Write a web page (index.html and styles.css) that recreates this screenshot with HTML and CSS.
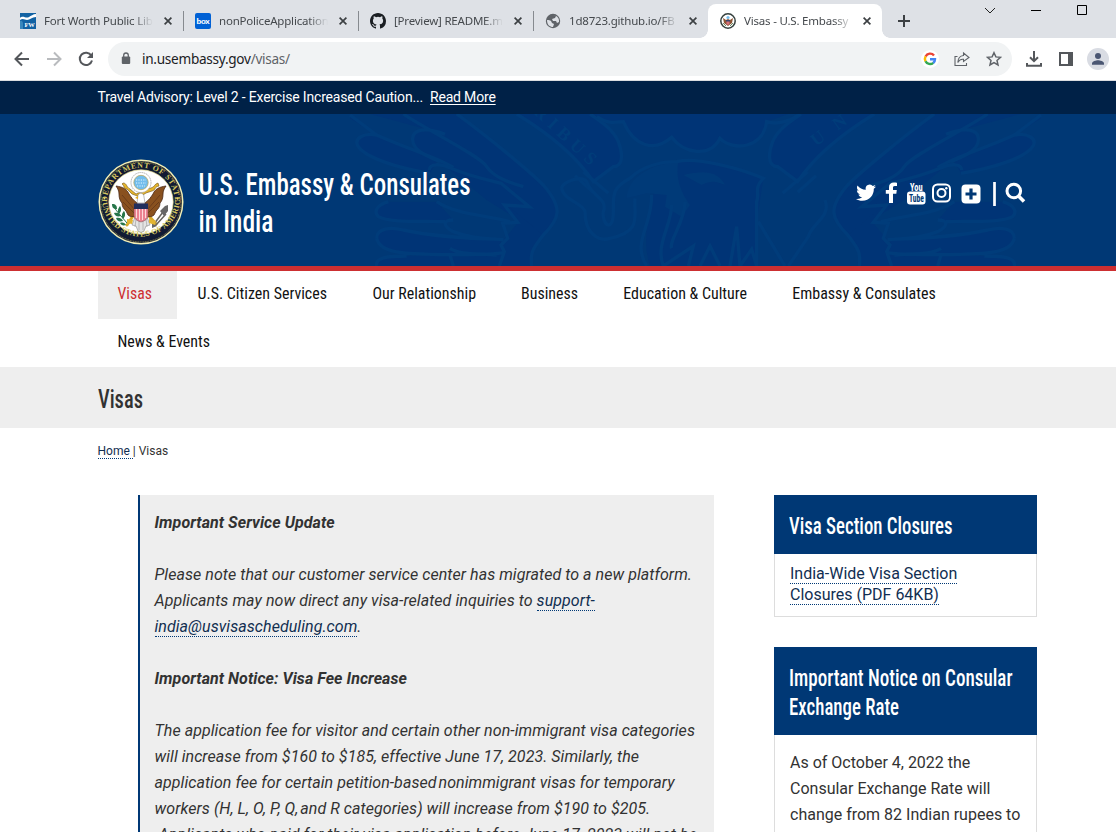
FILE: index.html
```html
<!DOCTYPE html>
<html lang="en">
<head>
<meta charset="utf-8">
<title>Visas - U.S. Embassy &amp; Consulates in India</title>
<link rel="stylesheet" href="styles.css">
</head>
<body>
<svg class="defs" width="0" height="0" aria-hidden="true">
  <defs>
    <symbol id="close" viewBox="0 0 8 8"><path d="M.6.6l6.8 6.8M7.400.6L.6 7.400" stroke="#3c4043" stroke-width="1.700" fill="none"/></symbol>
    <symbol id="seal" viewBox="0 0 86 86">
      <circle cx="43" cy="43" r="42.500" fill="#f4efb5"/>
      <circle cx="43" cy="43" r="41" fill="#111a33"/>
      <circle cx="43" cy="43" r="40" fill="none" stroke="#d8c95a" stroke-width=".6" stroke-dasharray="1 .7"/>
      <circle cx="43" cy="43" r="32.200" fill="#fff" stroke="#e5dc8c" stroke-width=".7"/>
      <path id="arcTop" d="M9.400 48A34 34 0 1 1 76.600 48" fill="none"/>
      <path id="arcBottom" d="M3.700 41A39.400 39.400 0 0 0 82.300 41" fill="none"/>
      <g class="seal-text">
        <text><textPath href="#arcTop" startOffset="5" textLength="107">DEPARTMENT OF STATE</textPath></text>
        <text><textPath href="#arcBottom" startOffset="3" textLength="121">UNITED STATES OF AMERICA</textPath></text>
      </g>
      <circle cx="6.500" cy="39.500" r="1" fill="#e8d765"/><circle cx="79.500" cy="39.500" r="1" fill="#e8d765"/>
      <path d="M35 57l-6 9M51 57l7 8" stroke="#d7a92b" stroke-width="3" stroke-linecap="round"/>
      <path d="M37 58l-3 8 4 1 2 5 3 1.500 3-1.500 2-5 4-1-3-8z" fill="#e4e4e4" stroke="#888" stroke-width=".6"/>
      <path d="M38 60l-1 8M41 60v11M45 60v11M48 60l1 8" stroke="#999" stroke-width=".6"/>
      <path id="sealWing" d="M39 44c-4-3-6-6-8-9-2-5-6-7-13-8 2 3 3 5 3 8 0 4 1 7 3 9 0 4 2 6 4 8l2 4c2 2 5 2 7 1z" fill="#89511f" stroke="#482715" stroke-width=".8"/>
      <use href="#sealWing" transform="matrix(-1 0 0 1 86 0)"/>
      <path d="M24 36l13 15M25 43l11 11M62 36L49 51M61 43L50 54" stroke="#5f3418" stroke-width=".7"/>
      <path d="M25 24c4 0 3 4 7 6l6 5c4-2 6-2 10-5l5-1c4-1 3-4 7-5l1 3c-5 1-3 4-7 5l-6 2-6 4-8-3-5-5c-4 0-2-3-5-5z" fill="#e5b52c" stroke="#6e531b" stroke-width=".6"/>
      <circle cx="43" cy="23.500" r="10" fill="#fff" stroke="#aaa" stroke-width="1" stroke-dasharray="1.300 .7"/>
      <circle cx="43" cy="23.500" r="7.200" fill="#72bdec" stroke="#b9a355" stroke-width=".7"/>
      <path d="M38 21h10M38 24h10M39 27h8" stroke="#e2f5ff" stroke-width="1.200" stroke-dasharray="1.200 1.200"/>
      <path d="M39 44l1-8c2-3 6-2 6 2l1 6z" fill="#fff" stroke="#777" stroke-width=".5"/><path d="M40 37l-3 2 3 1z" fill="#e1ac21"/>
      <path d="M36 45h14v12c-1 4-4 5-7 6-3-1-6-2-7-6z" fill="#eb8291" stroke="#714246" stroke-width=".5"/>
      <path d="M38.500 50v9M41.500 50v11M44.500 50v11M47.500 50v9" stroke="#ffe3e3" stroke-width=".9"/><path d="M36 44.500h14V50H36z" fill="#212e5c"/>
      <path d="M16 48c3 5 8 10 13 16" fill="none" stroke="#267549" stroke-width="1"/>
      <path d="M14 45c4 0 5 2 5 5-4 0-5-2-5-5zm8 2c2 3 1 6-1 8-2-3-1-5 1-8zm-6 7c4-1 6 1 7 3-4 1-6 0-7-3zm10-2c2 3 1 6-1 8-2-3-1-6 1-8zm-8 7c4-1 6 1 7 3-4 1-6 0-7-3zm4 5c3-1 5 0 6 2-3 1-5 0-6-2z" fill="#267549"/>
      <path d="M56 65l9-12M58 66l10-11" stroke="#67645f" stroke-width="1.500"/><path d="M62 52l5-5 3-1v6l-4 5zM54 62l5 5-5 2z" fill="#666"/>
      <path d="M51 60l7 2-1 4-6-2zM29 60l6 1-1 4-5-1z" fill="#e2b532"/>
    </symbol>
    <g id="wing">
      <g class="dark">
        <path d="M0 40l80 50C40 83 12 100 23 122 45 160 150 190 240 205l20-35L80 90 0 30zM60 27L285 88 160 27z"/>
        <path d="M285 88C230 65 185 72 188 105c2 35 50 50 82 65l140 115L580 390c50-50 60-80 0-150C540 200 420 100 320 27H160c70 48 235 128 250 158z"/>
        <path d="M115 290c-35 10-45 30-30 45 35 20 140 12 200 15l25-5-50-55zM80 400c0-30 40-35 80-25 90 20 180 25 290 28l10 40-170 6c-130-2-200-4-210-49zM80 483c-5-25 30-30 90-30l280-5 15-48 40-48-35-52 110 90c-30 40-40 50-35 93z"/>
        <path d="M500 27C620 100 690 170 730 230l60-45c35 0 25-50 15-75-15-35-50-60-85-83z"/>
      </g>
      <g class="lines">
        <path d="M0 30L80 90c100 45 190 70 230 98M80 90C40 83 12 100 23 122 45 160 150 190 240 205M160 27C230 75 395 155 410 185c20 30 60 45 110 60M285 88C230 65 185 72 188 105c2 35 50 50 82 65M320 27c100 73 220 173 260 213 60 70 50 100 0 150-30 40-40 50-35 93"/>
        <path d="M238 195c0-20 35-20 65-5 60 25 110 35 150 45l85 70-75-5 40 52-45 3 15 45-20 20 10 20-15 43M260 290c60 40 150 40 220 60M115 290c-35 10-45 30-30 45 35 20 140 12 200 15M310 345c-35 0-30 20 0 35 50 20 100 20 150 24M80 400c0-30 40-35 80-25 90 20 180 25 290 28M80 400c10 45 80 47 210 49 90 0 150 0 170-6M80 483c-5-25 30-30 90-30M300 430c30 20 80 15 140 20M300 450l10 33"/>
        <path d="M500 27C620 100 690 170 730 230l60-45c35 0 25-50 15-75-15-35-50-60-85-83M700 200l75 65M675 212l55 50"/>
      </g>
    </g>
  </defs>
</svg>

<div class="tabs">
  <div class="tab">
    <svg class="fav" viewBox="0 0 16 16"><path d="M0 0h16v16H0z" fill="#1262a3"/><path d="M0 5c3-3 6 1 9-1 2-1 4-3 7-3v3c-4 0-6 3-9 3-2 0-4-2-7 0z" fill="#fff"/><text x="4.500" y="14" font-family="Liberation Serif" font-size="6.500" font-weight="700" fill="#fff">FW</text><path d="M0 8c2-1 3 1 3 3v5H0z" fill="#3988bd"/></svg>
    <span class="label">Fort Worth Public Lib</span><svg class="x"><use href="#close"/></svg>
  </div>
  <div class="tab sep">
    <svg class="fav" viewBox="0 0 16 16"><rect width="16" height="16" rx="2" fill="#0061d5"/><text x="1.500" y="10.800" font-family="Lato" font-size="7.500" font-weight="900" textLength="13" lengthAdjust="spacingAndGlyphs" fill="#fff">box</text></svg>
    <span class="label">nonPoliceApplication</span><svg class="x"><use href="#close"/></svg>
  </div>
  <div class="tab sep">
    <svg class="fav" viewBox="0 0 16 16"><path d="M8 0C3.580 0 0 3.580 0 8c0 3.540 2.290 6.530 5.470 7.590.4.070.55-.17.55-.38 0-.19-.01-.82-.01-1.490-2.010.37-2.530-.49-2.690-.94-.09-.23-.48-.94-.82-1.130-.28-.15-.68-.52-.01-.53.630-.01 1.080.58 1.230.82.720 1.210 1.870.87 2.330.66.070-.52.280-.87.510-1.070-1.780-.2-3.640-.89-3.640-3.950 0-.87.310-1.590.82-2.150-.08-.2-.36-1.020.08-2.120 0 0 .67-.21 2.200.82a7.640 7.640 0 0 1 4 0c1.530-1.040 2.200-.82 2.200-.82.440 1.100.16 1.920.08 2.120.51.560.82 1.270.82 2.150 0 3.070-1.870 3.750-3.650 3.950.29.250.54.730.54 1.480 0 1.070-.01 1.930-.01 2.200 0 .21.150.46.550.38A8.010 8.010 0 0 0 16 8c0-4.420-3.580-8-8-8z" fill="#1b1f23"/></svg>
    <span class="label">[Preview] README.m</span><svg class="x"><use href="#close"/></svg>
  </div>
  <div class="tab sep">
    <svg class="fav" viewBox="0 0 16 16"><circle cx="8" cy="8" r="7.200" fill="#5f6368"/><path d="M2 7c2 0 3 0 4 1l1 2 2 1-1 3c-3 0-6-2-6-7zM8 2l3 1-1 2-3 1 1 2h3l1 2 2-1c.5-3-1-6-6-7z" fill="#dee1e6"/></svg>
    <span class="label">1d8723.github.io/FB</span><svg class="x"><use href="#close"/></svg>
  </div>
  <div class="tab active">
    <svg class="fav" viewBox="0 0 16 16"><circle cx="8" cy="8" r="7.200" fill="#fff" stroke="#35413e" stroke-width="1.500"/><circle cx="8" cy="4.500" r="1.600" fill="#77bdec"/><path d="M3 5l3 2 2-1 2 1 3-2-1 5-4 3-4-3z" fill="#8c5434"/><path d="M6.500 8h3v3l-1.500 1-1.500-1z" fill="#d8707c"/><path d="M6 7h4v1.500H6z" fill="#39466b"/><path d="M3 10l3 3M13 10l-3 3" stroke="#688b63"/></svg>
    <span class="label">Visas - U.S. Embassy</span><svg class="x"><use href="#close"/></svg>
  </div>
  <svg class="newtab" viewBox="0 0 12 12"><path d="M6 0v12M0 6h12" stroke="#3c4043" stroke-width="2"/></svg>
  <div class="window-buttons">
    <svg width="12" height="12" viewBox="0 0 12 12"><path d="M1 4l5 5 5-5" fill="none" stroke="#222"/></svg>
    <svg width="10" height="12" viewBox="0 0 10 12"><path d="M0 6.500h10" stroke="#000"/></svg>
    <svg width="10" height="12" viewBox="0 0 10 12"><path d="M.5 1.500h9v9h-9z" fill="none" stroke="#000"/></svg>
  </div>
</div>

<div class="toolbar">
  <svg class="tool" viewBox="0 0 16 16"><path d="M15 8H2M8 1.500L1.500 8 8 14.500" stroke="#54575b"/></svg>
  <svg class="tool" viewBox="0 0 16 16"><path d="M1 8h13M8 1.500L14.500 8 8 14.500" stroke="#b9bbbe"/></svg>
  <svg class="tool" viewBox="0 0 16 16"><path d="M13.300 4.600A6.200 6.200 0 1 0 14 9.500" stroke="#54575b"/><path d="M15 1v6H9z" fill="#54575b"/></svg>
  <div class="address">
    <svg class="lock" viewBox="0 0 10 13"><rect x=".8" y="4.500" width="8.400" height="7.500" rx="1" fill="#5f6368"/><path d="M2.700 5V3.300a2.300 2.300 0 0 1 4.600 0V5" fill="none" stroke="#5f6368" stroke-width="1.300"/></svg>
    <span class="url">in.usembassy.gov<i>/visas/</i></span>
    <svg class="google" viewBox="0 0 18 18"><circle cx="9" cy="9" r="9" fill="#fff"/><g fill="none" stroke-width="2.400"><path d="M13 5.500A5 5 0 0 0 4.600 6.500" stroke="#ea4335"/><path d="M4.600 6.400a5 5 0 0 0 0 5" stroke="#fbbc05"/><path d="M4.500 11.200A5 5 0 0 0 12.300 12.800" stroke="#34a853"/><path d="M9 9.200h5c0 2-.8 3-1.800 3.800" stroke="#4285f4"/></g></svg>
    <svg class="share" viewBox="0 0 16 16"><path d="M3.500 5.500H1v9h11.500V12M9.500 2l5.500 4.500-5.500 4V8.300C7 8 5 9 3.800 11.500 4 7 6 4.800 9.500 4.500z" fill="none" stroke="#5f6368" stroke-width="1.100"/></svg>
    <svg class="star" viewBox="0 0 16 16"><path d="M8 1.700l1.900 4.200 4.600.4L11 9.400l1 4.500L8 11.500l-4 2.400 1-4.500L1.500 6.300l4.600-.4z" fill="none" stroke="#5f6368" stroke-width="1.500"/></svg>
  </div>
  <svg class="download" viewBox="0 0 16 16"><path d="M8 0v10M4 6.200l4 4 4-4M1 12v2.800h14V12" fill="none" stroke="#54575b" stroke-width="2"/></svg>
  <svg class="panel" viewBox="0 0 14 14"><path d="M1 1h12v12H1z" fill="none" stroke="#54575b" stroke-width="2"/><path d="M9 1h4v12H9z" fill="#54575b"/></svg>
  <svg class="avatar" viewBox="0 0 22 22"><circle cx="11" cy="11" r="11" fill="#d9dce3"/><circle cx="11" cy="8" r="3" fill="#4a5672"/><path d="M5 16.800v-1.500c0-2 4-3.100 6-3.100s6 1.100 6 3.100v1.500z" fill="#4a5672"/></svg>
</div>

<div class="advisory"><span>Travel Advisory: Level 2 - Exercise Increased Caution...</span><a href="#">Read More</a></div>

<header class="banner">
  <svg class="pattern" viewBox="0 0 1116 152" aria-hidden="true">
    <use href="#wing" transform="translate(350 -9) scale(.33333)"/>
    <use href="#wing" transform="translate(1041 -9) scale(-.33333 .33333)"/>
    <g transform="translate(350 -9) scale(.33333)">
      <path class="dark" d="M740 35c35 25 65 15 80 15 30 70 90 95 145 47 35 48 115 63 145 3 40 40 130 30 140-50l65-23H730zM980 170c80-20 200 20 260 50l-20 130v133H900c-20-60-10-110 0-185l10-30-60-28c30-40 70-60 130-70z"/>
      <path class="tone" d="M830 280c0-50 50-100 155-110-10 60 15 100 35 130l-25 35-50-30 5-35-60-5zM1000 210c80-20 110 0 125 30-25-10-40-15-70 0z"/>
      <path class="lines" d="M635 250c0-20 60-40 75-20 15 45 65 50 50 90-5 40 30 65 30 0 0-50-5-70 50-100 40-40 100-50 140-50 60-15 190 20 260 50-30 30-10 45-20 70v193M635 250c5 35 65 45 70 70 0 70 45 90 75 80 100-20 70-70 75-120M905 270c0 100-60 140-15 213M965 300c0 60-50 120-25 183M1005 290c0 60-50 120-40 140M940 483l90-60-15 60M1050 483l30-60 30 60M1140 483l20-118 10 118 35-50 15 50M1225 350l80 133M740 35c35 25 65 15 80 15 30 70 90 95 145 47 35 48 115 63 145 3 40 40 130 30 140-50 30 10 70 0 100-23M1425 285c20 50-40 70-50 110l-60 88"/>
      <g class="motto" transform="translate(548 23) rotate(43)"><text textLength="235">RIBUS</text></g>
    </g>
    <g transform="translate(740 -9) scale(.33333)"><g class="motto" transform="translate(228 125) rotate(-36)"><text textLength="120">UN</text></g></g>
  </svg>
  <div class="banner-row">
    <svg class="seal" width="86" height="86"><use href="#seal"/></svg>
    <h1 class="site-name">
      <svg width="280" height="36"><text x=".5" y="25" textLength="272" lengthAdjust="spacingAndGlyphs">U.S. Embassy &amp; Consulates</text></svg>
      <svg width="280" height="36"><text x=".5" y="25.500" textLength="75" lengthAdjust="spacingAndGlyphs">in India</text></svg>
    </h1>
    <svg class="social" width="172" height="26" viewBox="0 0 172 26">
      <path d="M20 5.500c-.8.4-1.600.6-2.400.7.900-.5 1.500-1.300 1.800-2.200-.8.400-1.700.8-2.600 1a4.050 4.050 0 0 0-7 3.700C6.400 8.500 3.400 6.900 1.500 4.400c-1.100 1.900-.5 4.200 1.300 5.400-.7 0-1.300-.2-1.900-.5 0 2 1.400 3.700 3.300 4.100-.6.200-1.200.2-1.800.1.500 1.600 2 2.800 3.800 2.800A8.300 8.300 0 0 1 0 18c1.800 1.200 3.900 1.800 6.200 1.800 7.500 0 11.900-6.300 11.600-12.100.9-.6 1.600-1.300 2.200-2.200z" fill="#fff"/>
      <path d="M41 1.800V5h-2.200c-1.500 0-1.800.7-1.800 1.800V9h3.800l-.5 3.700H37V22h-4v-9.300h-3.200V9H33V6.200C33 3 35 1.500 37.800 1.500c1.400 0 2.600.1 3.200.3z" fill="#fff"/>
      <text x="54" y="9.500" class="you" textLength="12.500" lengthAdjust="spacingAndGlyphs">You</text><rect x="51" y="10.500" width="18.500" height="13" rx="3" fill="#fff"/><text x="53" y="21" class="tube" textLength="15" lengthAdjust="spacingAndGlyphs">Tube</text>
      <rect x="77" y="3.500" width="17" height="17" rx="4.500" fill="none" stroke="#fff" stroke-width="2"/><circle cx="85.500" cy="12" r="4" fill="none" stroke="#fff" stroke-width="2"/><circle cx="90.300" cy="7.200" r="1.200" fill="#fff"/>
      <rect x="105.500" y="3.500" width="19" height="19" rx="4" fill="#fff"/><path d="M115 7.500v11M109.500 13h11" stroke="#003875" stroke-width="3.200"/>
      <path d="M138.500 1v24" stroke="#fff" stroke-width="2.700"/>
      <circle cx="157.800" cy="10" r="6.800" fill="none" stroke="#fff" stroke-width="3"/><path d="M162.500 15l5.500 5.500" stroke="#fff" stroke-width="3.600"/>
    </svg>
  </div>
</header>

<nav class="menu">
  <a class="current" href="#"><svg width="34" height="48"><text x="-.5" y="28" textLength="34.500" lengthAdjust="spacingAndGlyphs">Visas</text></svg></a>
  <a href="#"><svg width="130" height="48"><text x=".5" y="28" textLength="129.500" lengthAdjust="spacingAndGlyphs">U.S. Citizen Services</text></svg></a>
  <a href="#"><svg width="104" height="48"><text x=".5" y="28" textLength="103.500" lengthAdjust="spacingAndGlyphs">Our Relationship</text></svg></a>
  <a href="#"><svg width="57" height="48"><text y="28" textLength="57" lengthAdjust="spacingAndGlyphs">Business</text></svg></a>
  <a href="#"><svg width="124" height="48"><text x=".3" y="28" textLength="123.700" lengthAdjust="spacingAndGlyphs">Education &amp; Culture</text></svg></a>
  <a href="#"><svg width="144" height="48"><text x=".3" y="28" textLength="143.500" lengthAdjust="spacingAndGlyphs">Embassy &amp; Consulates</text></svg></a>
  <a href="#"><svg width="93" height="48"><text x="-.5" y="28" textLength="92.500" lengthAdjust="spacingAndGlyphs">News &amp; Events</text></svg></a>
</nav>

<h2 class="page-title"><svg width="60" height="61"><text y="41" textLength="45" lengthAdjust="spacingAndGlyphs">Visas</text></svg></h2>
<div class="crumbs"><a href="#">Home </a>| Visas</div>

<main class="content">
  <article class="notice">
    <p><b>Important Service Update</b></p>
    <p>Please note that our customer service center has migrated to a new platform.<br>Applicants may now direct any visa-related inquiries to <a href="#">support-<br>india@usvisascheduling.com</a>.</p>
    <p><b>Important Notice: Visa Fee Increase</b></p>
    <p>The application fee for visitor and certain other non-immigrant visa categories<br>will increase from $160 to $185, effective June 17, 2023. Similarly, the<br>application fee for certain petition-based<span class="tight"> </span>nonimmigrant visas for temporary<br>workers (H, L, O, P, Q,<span class="tight"> </span>and R categories) will increase from $190 to $205.<br>&nbsp;Applicants who paid for their visa application before June 17, 2023 will not be</p>
  </article>
  <aside class="side">
    <section class="card">
      <h3><svg width="240" height="29"><text y="24" textLength="163.500" lengthAdjust="spacingAndGlyphs">Visa Section Closures</text></svg></h3>
      <p class="links"><a href="#">India-Wide Visa Section<br>Closures (PDF 64KB)</a></p>
    </section>
    <section class="card">
      <h3><svg width="240" height="29"><text y="24" textLength="223.500" lengthAdjust="spacingAndGlyphs">Important Notice on Consular</text></svg><svg width="240" height="29"><text y="24" textLength="110" lengthAdjust="spacingAndGlyphs">Exchange Rate</text></svg></h3>
      <p class="text">As of October 4, 2022 the<br>Consular Exchange Rate will<br>change from 82 Indian rupees to</p>
    </section>
  </aside>
</main>
</body>
</html>
```
FILE: styles.css
```css
* { box-sizing: border-box; }
html, body { height: 832px; overflow: hidden; }
body { margin: 0; background: #fff; color: #323232; font: 16px/26px Roboto, sans-serif; }
svg { display: block; flex: none; }
h1, h2, h3, p { margin: 0; font-weight: 400; }
.defs { position: absolute; }
.seal-text { font: 700 7.8px "Liberation Serif", serif; fill: #d9ca62; }

.tabs { display: flex; height: 38px; padding-left: 8px; background: #dee1e6; font: 11.5px/16px "Noto Sans", sans-serif; letter-spacing: -.2px; color: #45494d; }
.tab { position: relative; display: flex; align-items: center; width: 175px; height: 34px; margin-top: 4px; padding: 0 11px 0 12px; }
.tab.sep::before { content: ""; position: absolute; left: 0; top: 7px; width: 1px; height: 20px; background: #868a8f; }
.fav { width: 16px; height: 16px; margin-right: 8px; }
.label { width: 109px; white-space: nowrap; -webkit-mask-image: linear-gradient(90deg, #000 82%, transparent); mask-image: linear-gradient(90deg, #000 82%, transparent); }
.x { width: 8px; height: 8px; margin-left: 11px; }
.tab.active { background: #fff; border-radius: 8px 8px 0 0; }
.tab.active::before, .tab.active::after { content: ""; position: absolute; bottom: 0; width: 8px; height: 8px; background: radial-gradient(circle at 0 0, transparent 7.5px, #fff 8px); }
.tab.active::before { left: -8px; }
.tab.active::after { right: -8px; transform: scaleX(-1); }
.tab.active .x { margin-left: 10px; }
.newtab { width: 12px; height: 12px; margin: 15px 0 0 16px; }
.window-buttons { display: flex; margin: 4px 0 0 74px; }
.window-buttons svg { margin-right: 36px; }
.window-buttons svg:first-child { margin-right: 35px; }

.toolbar { display: flex; align-items: center; height: 43px; padding: 0 7px 1px 14px; border-bottom: 1px solid #dadce0; }
.tool { width: 16px; height: 16px; margin-right: 16px; fill: none; stroke-width: 2; }
.address { display: flex; align-items: center; width: 905px; height: 34px; margin-left: -2px; padding: 0 10px 0 13px; border-radius: 17px; background: #f1f3f4; }
.lock { width: 10px; height: 13px; margin-right: 11px; }
.url { flex: 1; color: #202124; font: 13.6px/20px "Noto Sans", sans-serif; letter-spacing: -.28px; }
.url i { color: #5f6368; font-style: normal; }
.google { width: 18px; height: 18px; margin-right: 15px; }
.share { width: 16px; height: 16px; margin-right: 16px; }
.star { width: 16px; height: 16px; }
.download { width: 16px; height: 16px; margin-left: 14px; }
.panel { width: 14px; height: 14px; margin: 0 14px 0 17px; }
.avatar { width: 22px; height: 22px; }

.advisory { display: flex; gap: 7px; height: 33px; padding-left: 97.5px; background: #002147; color: #fff; font-size: 14px; letter-spacing: -.18px; line-height: 32px; white-space: nowrap; }
.advisory a { color: #fff; text-underline-offset: 2px; }

.banner { position: relative; height: 157px; background: #003875; border-bottom: 5px solid #cd2f31; }
.pattern { position: absolute; inset: 0; width: 1116px; height: 152px; }
.dark { fill: #003476; }
.lines { fill: none; stroke: #003c7a; stroke-width: 10; }
.tone { fill: #003a78; }
.motto { font: 700 54px "Liberation Serif", serif; fill: #003d7a; }
.banner-row { position: relative; display: flex; padding: 45px 0 0 98px; }
.site-name { width: 672px; padding: 11px 0 0 14px; font-size: 31px; fill: #fff; }
.site-name text, .menu text, .page-title text, .card h3 text { font-family: "Roboto Condensed", Roboto, sans-serif; }
.site-name text { font-weight: 500; }
.social { margin: 22px 0 0; }
.you, .tube { font: 700 10.5px "Roboto Condensed", Roboto, sans-serif; fill: #fff; }
.tube { fill: #003875; }

.menu { display: flex; flex-wrap: wrap; width: 940px; margin-left: 98px; font-size: 16.5px; }
.menu svg { overflow: visible; }
.menu a { padding: 0 25px 0 20px; fill: #111; }
.menu .current { background: #eee; fill: #cd2f31; }
.page-title { height: 61px; padding-left: 98px; background: #eee; font-size: 26px; font-weight: 500; fill: #323232; }
.crumbs { height: 67px; padding: 14px 0 0 97.5px; font-size: 12px; line-height: 18px; }
.crumbs a { white-space: pre; }
.crumbs a, .notice a, .links a { color: #112e51; text-decoration: none; border-bottom: 1px dotted #003875; }

.content { display: flex; align-items: flex-start; gap: 60px; padding-left: 138px; white-space: nowrap; }
.notice { width: 576px; height: 337px; padding: 15px 0 0 14.5px; overflow: hidden; border-left: 2px solid #003875; background: #eee; font-style: italic; letter-spacing: .06px; }
.notice p { margin-bottom: 26px; }
.tight { letter-spacing: -2px; }
.side { display: grid; gap: 30px; width: 263px; }
.card { border: solid #ddd; border-width: 0 1px 1px; }
.card h3 { margin: 0 -1px; padding: 15px 0 15px 15px; background: #003875; font-size: 23.5px; font-weight: 500; fill: #fff; }
.links { height: 62px; padding: 9px 0 0 15px; line-height: 21px; }
.text { height: 120px; padding: 15px 0 0 15px; }
```
